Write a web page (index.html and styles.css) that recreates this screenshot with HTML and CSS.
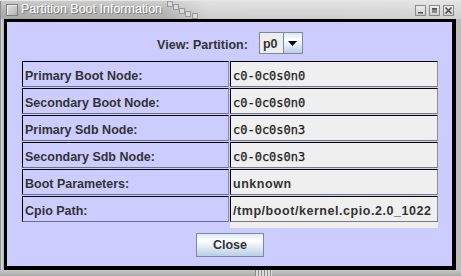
FILE: index.html
```html
<!DOCTYPE html>
<html>
<head>
<meta charset="utf-8">
<link rel="stylesheet" href="styles.css">
</head>
<body>
<div class="window">
  <div class="titlebar">
    <span class="t-icon"></span>
    <span class="t-text">Partition Boot Information</span>
    <svg class="t-grip" width="36" height="19" viewBox="0 0 36 19">
      <g fill="#d9d9d9" stroke="#9a9a9a" stroke-width="1">
        <rect x="0.5" y="1.5" width="5" height="5"/>
        <rect x="6.5" y="4.5" width="5" height="5"/>
        <rect x="12.5" y="8.5" width="5" height="5"/>
        <rect x="18.5" y="11.5" width="5" height="5"/>
        <rect x="25.5" y="13.5" width="5" height="5"/>
      </g>
    </svg>
    <span class="t-spacer"></span>
    <span class="t-btn">
      <svg width="11" height="11" viewBox="0 0 11 11"><rect x="3" y="7" width="5" height="1.5" fill="#505050"/></svg>
    </span>
    <span class="t-btn">
      <svg width="11" height="11" viewBox="0 0 11 11"><rect x="3" y="3" width="5" height="5" fill="#8a8a8a"/><rect x="3" y="3" width="5" height="1.5" fill="#505050"/></svg>
    </span>
    <span class="t-btn">
      <svg width="11" height="11" viewBox="0 0 11 11"><path d="M2.5 2.5 L8.5 8.5 M8.5 2.5 L2.5 8.5" stroke="#505050" stroke-width="1.6"/></svg>
    </span>
  </div>
  <div class="frame">
    <div class="client">
      <div class="view-row">
        <span class="view-label">View: Partition:</span>
        <div class="combo">
          <span class="combo-field">p0</span>
          <span class="combo-arrow">
            <svg width="9" height="5" viewBox="0 0 9 5"><path d="M0 0 H9 L4.5 5 Z" fill="#000"/></svg>
          </span>
        </div>
      </div>
      <div class="table">
        <div class="cell label">Primary Boot Node:</div>
        <div class="cell value mono">c0-0c0s0n0</div>
        <div class="cell label">Secondary Boot Node:</div>
        <div class="cell value mono">c0-0c0s0n0</div>
        <div class="cell label">Primary Sdb Node:</div>
        <div class="cell value mono">c0-0c0s0n3</div>
        <div class="cell label">Secondary Sdb Node:</div>
        <div class="cell value mono">c0-0c0s0n3</div>
        <div class="cell label">Boot Parameters:</div>
        <div class="cell value sans">unknown</div>
        <div class="cell label">Cpio Path:</div>
        <div class="cell value sans">/tmp/boot/kernel.cpio.2.0_1022</div>
      </div>
      <div class="strip"></div>
      <button class="close-btn">Close</button>
    </div>
  </div>
  <div class="bottom-frame"><span class="b-grip"></span></div>
</div>
</body>
</html>
```
FILE: styles.css
```css
html, body {
  margin: 0;
  padding: 0;
}
body {
  width: 461px;
  height: 276px;
  overflow: hidden;
  background: #b8b8b8;
  font-family: "Liberation Sans", Arial, sans-serif;
}
.window {
  width: 461px;
  height: 276px;
  display: flex;
  flex-direction: column;
  background: #bcbcbc;
  box-shadow: inset 1px 0 0 #8e8e8e, inset 2px 0 0 #dadada;
}
.titlebar {
  height: 19px;
  flex: none;
  display: flex;
  align-items: center;
  padding: 0 7px 0 6px;
  background:
    linear-gradient(to bottom, rgba(255,255,255,0.35) 0, rgba(255,255,255,0) 60%, rgba(0,0,0,0.04) 100%),
    linear-gradient(to right, #b0b0b0 0, #b8b8b8 36%, #d6d6d6 45%, #d8d8d8 100%);
  box-shadow: inset 0 1px 0 #e6e6e6, inset 1px 0 0 #8e8e8e;
}
.t-icon {
  width: 10px;
  height: 10px;
  flex: none;
  border: 1px solid #7e7e7e;
  background: linear-gradient(135deg, #e2e2e2, #b4b4b4);
  box-shadow: inset 1px 1px 0 #f0f0f0;
}
.t-text {
  margin-left: 3px;
  font-size: 12.5px;
  line-height: 19px;
  color: #ffffff;
  text-shadow: 1px 1px 0 #7c7c7c;
  white-space: nowrap;
}
.t-grip {
  margin-left: 5px;
  flex: none;
}
.t-spacer {
  flex: 1;
}
.t-btn {
  width: 11px;
  height: 11px;
  flex: none;
  margin-left: 3px;
  border: 1px solid #8a8a8a;
  box-sizing: border-box;
  background: linear-gradient(#ececec, #cfcfcf);
  display: flex;
  align-items: center;
  justify-content: center;
  margin-top: 1px;
}
.t-btn svg {
  display: block;
  flex: none;
}
.frame {
  flex: 1;
  display: flex;
  padding: 0 5px 0 4px;
}
.client {
  flex: 1;
  display: flex;
  flex-direction: column;
  background: #ccccff;
  border-style: solid;
  border-color: #000;
  border-width: 3px 4px 4px 3px;
  padding: 10px 14px 0 15px;
}
.view-row {
  height: 22px;
  display: flex;
  align-items: center;
  justify-content: center;
  gap: 11px;
}
.view-label {
  font-weight: bold;
  font-size: 12.5px;
  color: #333333;
  padding-top: 3px;
}
.combo {
  display: flex;
  height: 22px;
}
.combo-field {
  width: 24px;
  box-sizing: border-box;
  border: 1px solid #7a8a99;
  border-right: none;
  background: #eeeeee;
  font-weight: bold;
  font-size: 12.5px;
  color: #333333;
  padding: 3px 0 0 3px;
  line-height: 16px;
}
.combo-arrow {
  width: 20px;
  box-sizing: border-box;
  border: 1px solid #7a8a99;
  background: linear-gradient(#dde8f3 0%, #ffffff 35%, #b8cfe5 100%);
  display: flex;
  align-items: center;
  justify-content: center;
}
.combo-arrow svg {
  display: block;
  margin-left: -1px;
}
.table {
  margin-top: 7px;
  display: grid;
  grid-template-columns: 207px 208px;
  grid-auto-rows: 26px;
  column-gap: 1px;
  row-gap: 1px;
}
.cell {
  box-sizing: border-box;
  border-top: 1px solid #000;
  border-left: 1px solid #000;
  padding: 4px 0 0 2px;
  line-height: 20px;
  white-space: nowrap;
  overflow: hidden;
  color: #333333;
}
.label {
  background: #ccccff;
  border-right: 1px solid #8a8aa8;
  border-bottom: 1px solid #6e6e8c;
  font-weight: bold;
  font-size: 12.5px;
}
.value {
  background: #efefef;
  border-right: 1px solid #8c8c8c;
  border-bottom: 1px solid #7a7a7a;
}
.mono {
  font-family: "DejaVu Sans Mono", "Liberation Mono", monospace;
  font-size: 12px;
  color: #1a1a1a;
  -webkit-text-stroke: 0.25px #1a1a1a;
}
.sans {
  font-weight: bold;
  font-size: 12.5px;
  letter-spacing: 0.55px;
}
.strip {
  margin-left: 208px;
  width: 208px;
  height: 6px;
  background: #eeeeee;
}
.close-btn {
  align-self: center;
  margin-top: 5px;
  width: 68px;
  height: 24px;
  border: 1px solid #7a8a99;
  background: linear-gradient(#dde8f3 0%, #ffffff 30%, #b8cfe5 100%);
  font-family: "Liberation Sans", Arial, sans-serif;
  font-weight: bold;
  font-size: 12.5px;
  color: #333333;
  padding: 0;
}
.bottom-frame {
  height: 6px;
  flex: none;
  display: flex;
  justify-content: center;
  background: linear-gradient(#c8c8c8, #a8a8a8);
}
.b-grip {
  width: 17px;
  margin-left: 66px;
  background: repeating-linear-gradient(to right, #8a8a8a 0, #8a8a8a 1px, #dcdcdc 1px, #dcdcdc 3px);
}
```
